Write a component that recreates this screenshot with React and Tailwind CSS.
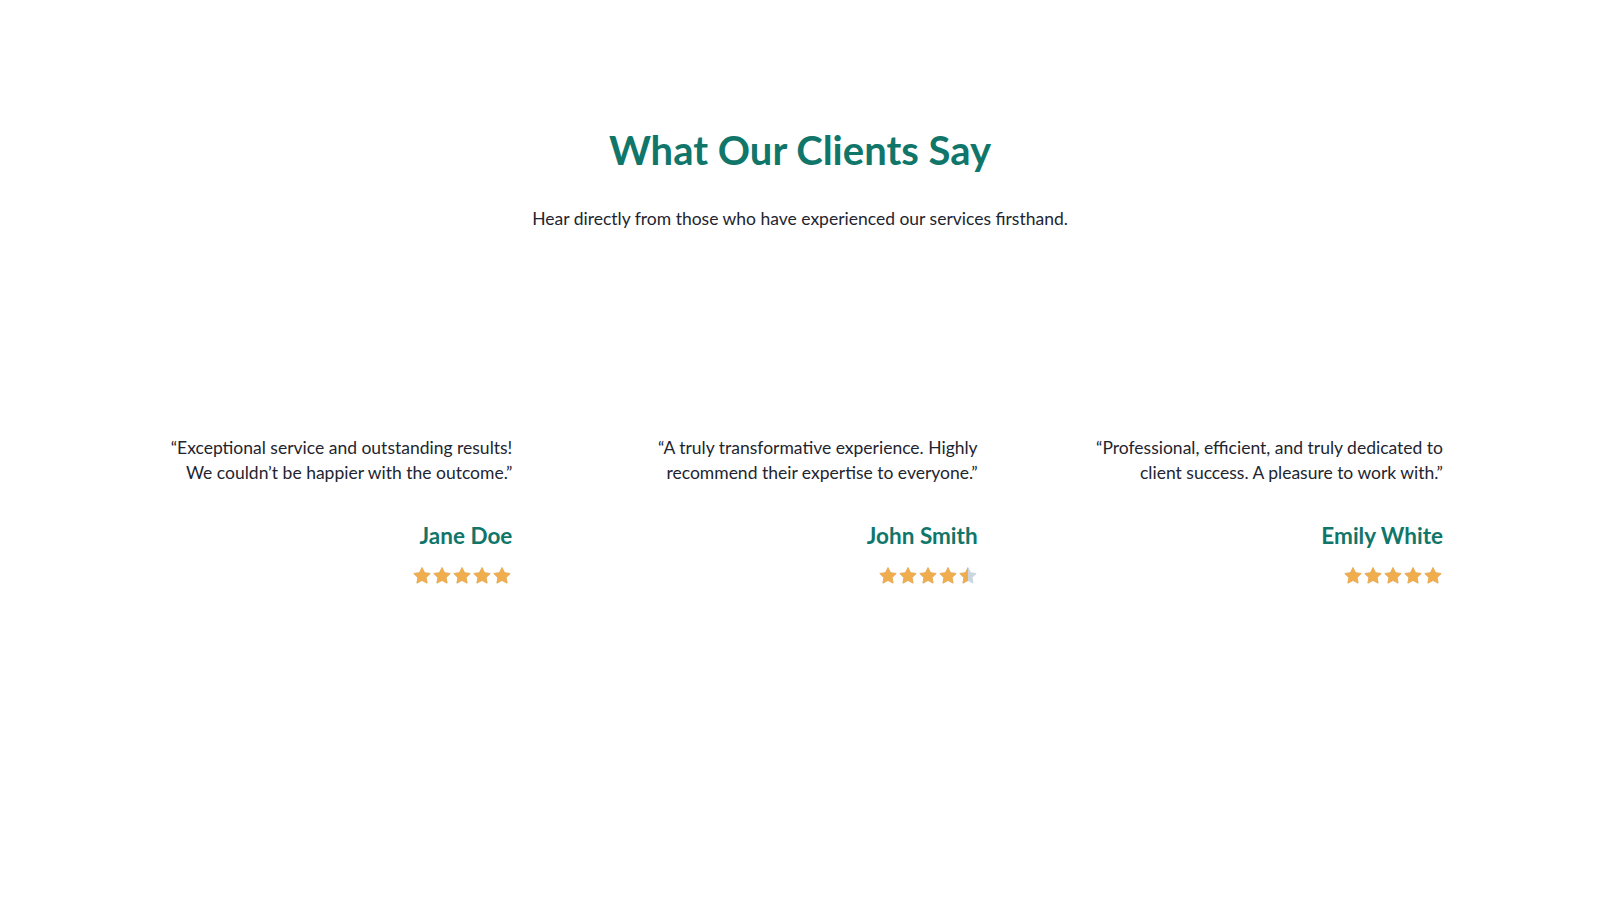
import { useId } from "react";

const testimonials = [
  {
    quote: "Exceptional service and outstanding results! We couldn’t be happier with the outcome.",
    name: "Jane Doe",
    rating: 5,
  },
  {
    quote: "A truly transformative experience. Highly recommend their expertise to everyone.",
    name: "John Smith",
    rating: 4.5,
  },
  {
    quote: "Professional, efficient, and truly dedicated to client success. A pleasure to work with.",
    name: "Emily White",
    rating: 5,
  },
];

const STAR =
  "M12 2l2.95 6.2 6.8.85-5 4.7 1.3 6.75L12 17.2l-6.05 3.3 1.3-6.75-5-4.7 6.8-.85z";

const Star = ({ fill }) => {
  const id = useId();
  return (
    <svg viewBox="0 0 24 24" className="w-5 h-5">
      <defs>
        <clipPath id={id}>
          <rect x="0" y="0" width={24 * fill} height="24" />
        </clipPath>
      </defs>
      <path d={STAR} fill="#cbd5e1" stroke="#cbd5e1" strokeWidth="1.2" strokeLinejoin="round" />
      <path
        d={STAR}
        fill="#f0ad4e"
        stroke="#f0ad4e"
        strokeWidth="1.2"
        strokeLinejoin="round"
        clipPath={`url(#${id})`}
      />
    </svg>
  );
};

const Rating = ({ value }) => (
  <div className="flex justify-end">
    {[0, 1, 2, 3, 4].map((i) => (
      <Star key={i} fill={Math.max(0, Math.min(1, value - i))} />
    ))}
  </div>
);

const App = () => {
  return (
    <div className="min-h-[900px] bg-white font-['Lato',sans-serif] text-[#1e2530]">
      <section className="pt-[124px] px-4">
        <h2 className="text-center text-[40px] leading-[52px] font-bold text-[#11766a]">
          What Our Clients Say
        </h2>
        <p className="mt-[31px] text-center text-[17.5px] leading-6">
          Hear directly from those who have experienced our services firsthand.
        </p>

        <div className="max-w-[1286px] mx-auto mt-[204px] grid grid-cols-3 gap-[110px]">
          {testimonials.map((t) => (
            <div key={t.name} className="text-right">
              <p className="text-[17.5px] leading-[25px]">{`“${t.quote}”`}</p>
              <h3 className="mt-[37px] text-[22.5px] leading-7 font-bold text-[#11766a]">
                {t.name}
              </h3>
              <div className="mt-[16px]">
                <Rating value={t.rating} />
              </div>
            </div>
          ))}
        </div>
      </section>
    </div>
  );
};

export default App;
